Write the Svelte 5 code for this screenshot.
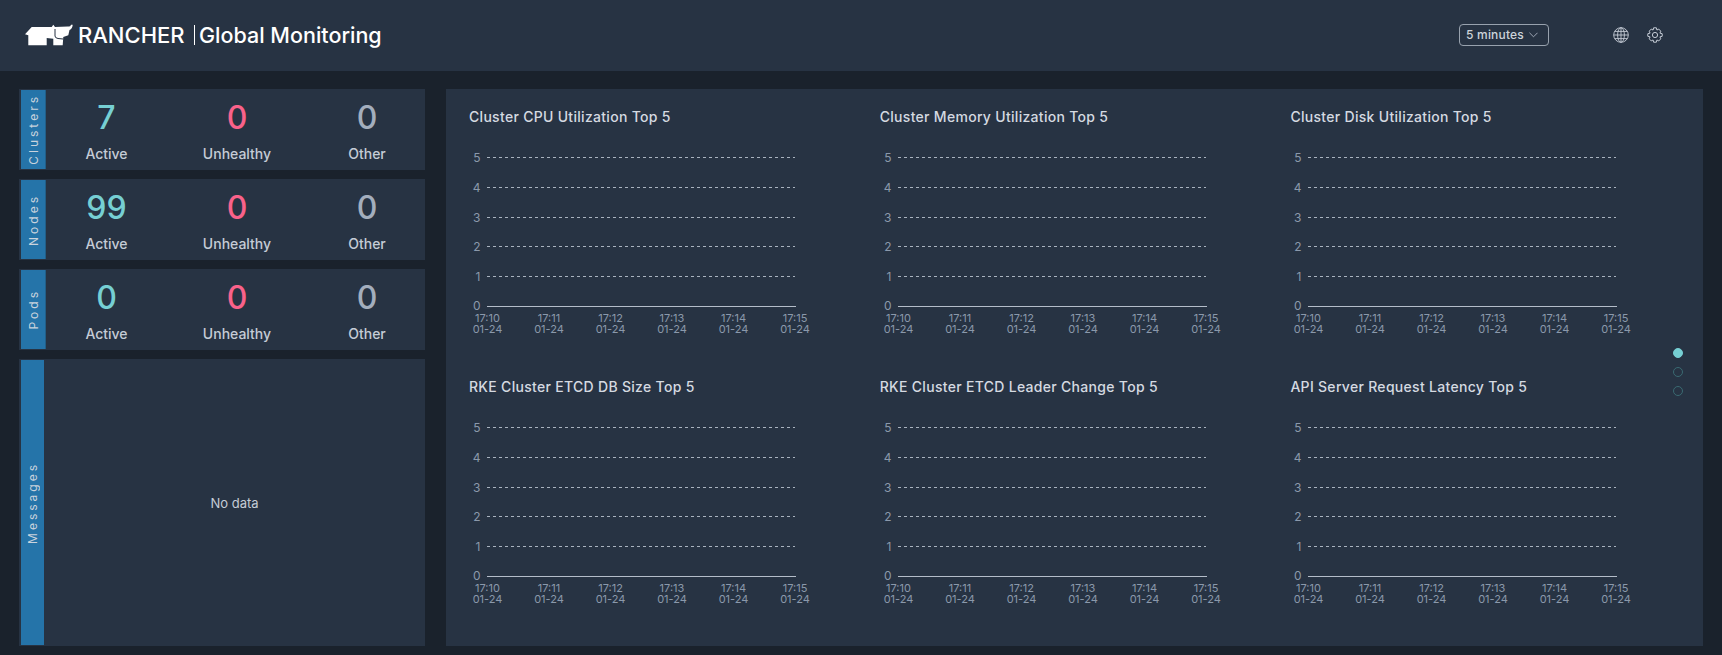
<script>
	const stats = [
		{ name: 'Clusters', values: [7, 0, 0] },
		{ name: 'Nodes', values: [99, 0, 0] },
		{ name: 'Pods', values: [0, 0, 0] }
	];
	const labels = ['Active', 'Unhealthy', 'Other'];
	const tones = ['green', 'pink', 'grey'];
	const charts = [
		'Cluster CPU Utilization Top 5',
		'Cluster Memory Utilization Top 5',
		'Cluster Disk Utilization Top 5',
		'RKE Cluster ETCD DB Size Top 5',
		'RKE Cluster ETCD Leader Change Top 5',
		'API Server Request Latency Top 5'
	];
	const ticks = [5, 4, 3, 2, 1];
	const times = ['17:10', '17:11', '17:12', '17:13', '17:14', '17:15'];
	// snap to whole pixels so the 1px lines stay crisp
	const rowY = (n) => Math.round(11 + (5 - n) * 29.8) + 0.5;
	const colX = (i) => 29.5 + i * 61.5;
</script>

<div class="page">
	<header>
		<svg class="logo" viewBox="0 0 48 22" width="48" height="22" aria-hidden="true">
			<path d="M0 10.3 L6.7 3 H26.7 L28.3 0.7 L30 3 L43 2.5 Q45.5 3 46 0.7 L47.7 0.7 Q47.5 4.5 44.5 6 L43.3 11.3 L38.3 13 L37.7 21.3 H28.3 V14.7 L21.7 14 V21.3 H3.3 V11.3 Z" fill="#fff" />
			<path d="M30 5 V12 Q30 14 33 14.5 L38 15" fill="none" stroke="#273343" stroke-width="1" />
		</svg>
		<span class="brand">RANCHER</span>
		<span class="bar"></span>
		<span class="brand sub">Global Monitoring</span>
		<div class="spacer"></div>
		<div class="range">
			<span>5 minutes</span>
			<svg viewBox="0 0 10 6" width="9" height="6" aria-hidden="true"><path d="M0.5 0.5 L5 5 L9.5 0.5" fill="none" stroke="#b8c0cc" stroke-width="0.9" /></svg>
		</div>
		<svg class="icon globe" viewBox="0 0 16 16" width="16" height="16" aria-hidden="true" fill="none" stroke="#c5ccd6" stroke-width="0.9">
			<circle cx="8" cy="8" r="7.3" />
			<ellipse cx="8" cy="8" rx="3.4" ry="7.3" />
			<path d="M8 0.7 V15.3 M0.7 8 H15.3 M1.7 4.4 H14.3 M1.7 11.6 H14.3" />
		</svg>
		<svg class="icon" viewBox="0 0 16 16" width="16" height="16" aria-hidden="true" fill="none" stroke="#c5ccd6" stroke-width="1">
			<path d="M6.6 0.8 H9.4 L9.9 3 L11.8 2.2 L13.9 4.2 L12.9 6.1 L15.2 6.7 V9.3 L12.9 9.9 L13.9 11.8 L11.8 13.8 L9.9 13 L9.4 15.2 H6.6 L6.1 13 L4.2 13.8 L2.1 11.8 L3.1 9.9 L0.8 9.3 V6.7 L3.1 6.1 L2.1 4.2 L4.2 2.2 L6.1 3 Z" stroke-linejoin="round" />
			<circle cx="8" cy="8" r="2.6" />
		</svg>
	</header>

	<main>
		<section class="left">
			{#each stats as stat}
				<div class="card">
					<div class="tag"><span>{stat.name}</span></div>
					<div class="cells">
						{#each stat.values as v, i}
							<div class="cell">
								<div class="num {tones[i]}">{v}</div>
								<div class="lbl">{labels[i]}</div>
							</div>
						{/each}
					</div>
				</div>
			{/each}
			<div class="card messages">
				<div class="tag"><span>Messages</span></div>
				<div class="empty">No data</div>
			</div>
		</section>

		<section class="right">
			<div class="grid">
				{#each charts as title}
					<div class="chart">
						<h3>{title}</h3>
						<svg viewBox="0 0 400 200" width="400" height="200" aria-hidden="true">
							{#each ticks as n}
								<text class="tick y" x="22.5" y={rowY(n) + 4} text-anchor="end">{n}</text>
								<line class="dash" x1="29" x2="337" y1={rowY(n)} y2={rowY(n)} />
							{/each}
							<text class="tick y" x="22.5" y={rowY(0) + 3} text-anchor="end">0</text>
							<line class="axis" x1="29" x2="338" y1={rowY(0)} y2={rowY(0)} />
							{#each times as t, i}
								<text class="tick" x={colX(i)} y="176" text-anchor="middle">{t}</text>
								<text class="tick" x={colX(i)} y="187" text-anchor="middle">01-24</text>
							{/each}
						</svg>
					</div>
				{/each}
			</div>
			<div class="dots">
				<span class="dot on"></span>
				<span class="dot"></span>
				<span class="dot"></span>
			</div>
		</section>
	</main>
</div>

<style>
	:global(body) {
		margin: 0;
		background: #1a222c;
	}

	.page {
		width: 1722px;
		height: 655px;
		overflow: hidden;
		font-family: Inter, 'Liberation Sans', sans-serif;
		color: #fff;
	}

	header {
		height: 71px;
		box-sizing: border-box;
		background: #273343;
		display: flex;
		align-items: center;
		padding: 0 59px 2px 25px;
	}

	.logo {
		margin-right: 5px;
	}

	.brand {
		font-size: 22px;
		line-height: 24px;
		font-weight: 500;
		color: #fff;
	}

	.brand.sub {
		font-size: 21.5px;
	}

	.bar {
		width: 1.5px;
		height: 20px;
		background: #fff;
		margin: 0 4px 0 9px;
	}

	.spacer {
		flex: 1;
	}

	.range {
		width: 90px;
		height: 22px;
		box-sizing: border-box;
		border: 1px solid #98a2ae;
		border-radius: 4px;
		display: flex;
		align-items: center;
		gap: 5px;
		padding-left: 6px;
		font-size: 12px;
		letter-spacing: 0.2px;
		font-weight: 500;
		color: #cdd3da;
		margin-right: 64px;
	}

	.icon {
		display: block;
	}

	.globe {
		margin-right: 18px;
	}

	main {
		display: flex;
		padding: 18px 19px 0;
		gap: 21px;
	}

	.left {
		width: 406px;
		display: flex;
		flex-direction: column;
		gap: 9px;
	}

	.card {
		height: 81px;
		background: #273343;
		display: flex;
		padding: 1px 0 1px 2px;
		box-sizing: border-box;
	}

	.tag {
		width: 25px;
		box-sizing: border-box;
		background: #2574a9;
		border-right: 1px solid #225f88;
		display: flex;
		align-items: center;
		justify-content: center;
		flex-shrink: 0;
	}

	.tag span {
		writing-mode: vertical-rl;
		transform: rotate(180deg);
		font-size: 12px;
		letter-spacing: 3px;
		color: #c9d3dd;
	}

	.cells {
		flex: 1;
		display: grid;
		grid-template-columns: 131px 130px 130px;
		margin-left: -5px;
	}

	.cell {
		text-align: center;
		padding-top: 10px;
	}

	.num {
		font-size: 32px;
		line-height: 36px;
		font-weight: 500;
	}

	.lbl {
		font-size: 14px;
		line-height: 18px;
		margin-top: 9px;
		font-weight: 500;
		color: #c5ccd6;
	}

	.green {
		color: #76cfd3;
	}

	.pink {
		color: #f9628a;
	}

	.grey {
		color: #a3aebd;
	}

	.messages {
		height: 287px;
	}

	.messages .tag {
		width: 23px;
		border-right: none;
	}

	.empty {
		flex: 1;
		display: flex;
		align-items: center;
		justify-content: center;
		font-size: 13px;
		color: #c5ccd6;
	}

	.right {
		flex: 1;
		height: 557px;
		background: #273343;
		position: relative;
		padding: 18px 0 0 23px;
		box-sizing: border-box;
	}

	.grid {
		display: grid;
		grid-template-columns: repeat(3, 410.7px);
		grid-auto-rows: 270px;
	}

	h3 {
		margin: 0 0 19px;
		font-size: 14px;
		letter-spacing: 0.3px;
		line-height: 20px;
		font-weight: 500;
		color: #d5dae1;
	}

	.chart svg {
		display: block;
		margin-left: -11px;
	}

	.tick {
		font-size: 11px;
		fill: #8b99ab;
	}

	.tick.y {
		font-size: 12px;
	}

	.dash {
		stroke: #a9b3bf;
		stroke-width: 1;
		stroke-dasharray: 3 3;
	}

	.axis {
		stroke: #b4bdc9;
		stroke-width: 1;
	}

	.dots {
		position: absolute;
		right: 20px;
		top: 259px;
		display: flex;
		flex-direction: column;
		gap: 9px;
	}

	.dot {
		width: 10px;
		height: 10px;
		box-sizing: border-box;
		border-radius: 50%;
		border: 1px solid #3a6a72;
	}

	.dot.on {
		background: #76cfd3;
		border-color: #76cfd3;
	}
</style>
